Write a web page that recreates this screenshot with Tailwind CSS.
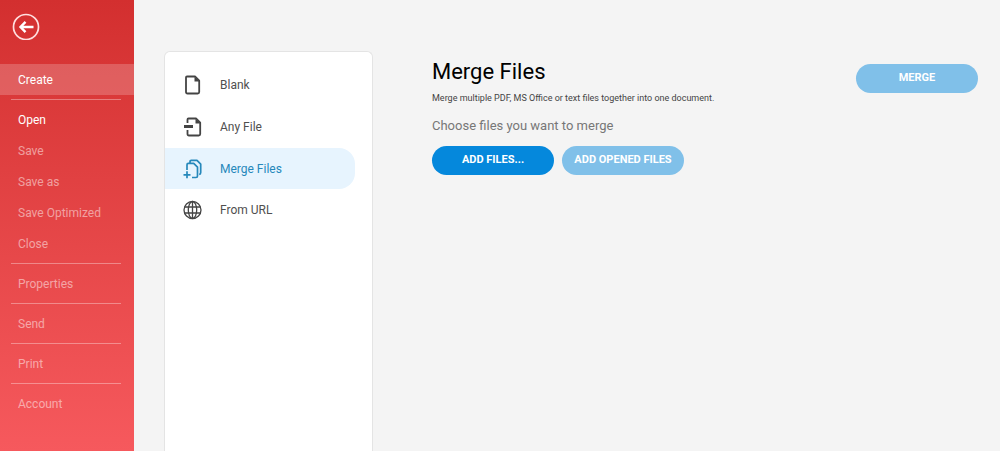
<!DOCTYPE html>
<html lang="en">
<head>
<meta charset="utf-8">
<title>Merge Files</title>
<script src="https://cdn.jsdelivr.net/npm/@tailwindcss/browser@4"></script>
</head>
<body class="flex h-screen overflow-hidden bg-[#f4f4f4] font-[Roboto,sans-serif] text-xs text-[#4f4f4f]">
  <aside class="w-[134px] shrink-0 bg-linear-to-b from-[#d32f2f] to-[#f6595d] pt-3">
    <button aria-label="Back" class="ml-3 block size-7">
      <svg viewBox="0 0 28 28" class="size-7" fill="none" stroke="#fff">
        <circle cx="14" cy="15" r="12.500" stroke-width="1.700" stroke="#ffdede"/>
        <path d="M21.500 15H9M13.500 9.800L8.500 15l5 5.200" stroke-width="2.400"/>
      </svg>
    </button>
    <nav class="mt-6 text-white/50">
      <a href="#" class="flex h-[31px] items-center bg-white/20 pl-[18px] text-white">Create</a>
      <hr class="mr-[13px] ml-[11px] my-1 border-white/35">
      <a href="#" class="flex h-[31px] items-center pl-[18px] text-white">Open</a>
      <a href="#" class="flex h-[31px] items-center pl-[18px]">Save</a>
      <a href="#" class="flex h-[31px] items-center pl-[18px]">Save as</a>
      <a href="#" class="flex h-[31px] items-center pl-[18px]">Save Optimized</a>
      <a href="#" class="flex h-[31px] items-center pl-[18px]">Close</a>
      <hr class="mr-[13px] ml-[11px] my-1 border-white/35">
      <a href="#" class="flex h-[31px] items-center pl-[18px]">Properties</a>
      <hr class="mr-[13px] ml-[11px] my-1 border-white/35">
      <a href="#" class="flex h-[31px] items-center pl-[18px]">Send</a>
      <hr class="mr-[13px] ml-[11px] my-1 border-white/35">
      <a href="#" class="flex h-[31px] items-center pl-[18px]">Print</a>
      <hr class="mr-[13px] ml-[11px] my-1 border-white/35">
      <a href="#" class="flex h-[31px] items-center pl-[18px]">Account</a>
    </nav>
  </aside>

  <nav class="mt-[51px] ml-[30px] w-[209px] shrink-0 rounded-t-md border border-b-0 border-[#e4e4e4] bg-white pt-3">
    <a href="#" class="flex h-[42px] items-center gap-4 pl-[17px]">
      <svg viewBox="0 0 22 22" class="size-[22px]" fill="none" stroke="#444" stroke-width="1.800" stroke-linejoin="round">
        <path d="M5 2.500h8.200l4 4.200V18q0 1.500-1.500 1.500H5.500Q4 19.500 4 18V3.500q0-1 1-1z"/>
        <path d="M12.500 2.500v5h5z" fill="#444" stroke="none"/>
      </svg>
      Blank
    </a>
    <a href="#" class="flex h-[42px] items-center gap-4 pl-[17px]">
      <svg viewBox="0 0 22 22" class="size-[22px]" fill="none" stroke="#444" stroke-width="1.800" stroke-linejoin="round">
        <path d="M5.500 7V3.500q0-1 1-1h7.700l4 4.200V18q0 1.500-1.500 1.500H7Q5.500 19.500 5.500 18v-4"/>
        <path d="M13.500 2.500v5h5z" fill="#444" stroke="none"/>
        <path d="M2 10.500h9" stroke-width="3"/>
      </svg>
      Any File
    </a>
    <a href="#" class="mr-[17px] flex h-[41px] items-center gap-4 rounded-r-2xl bg-[#e7f4fe] pl-[17px] text-[#2688bb]">
      <svg viewBox="0 0 22 22" class="size-[22px]" fill="none" stroke="#2688bb" stroke-width="1.700" stroke-linejoin="round">
        <path d="M8 5V3.700q0-1.300 1.300-1.300H15l3.700 3.700v8.400q0 1.700-1.500 2"/>
        <path d="M5 12V6.800q0-1.400 1.300-1.400h5.400l3.800 3.800v8.800q0 1.500-1.500 1.500h-4"/>
        <path d="M1.500 16.800h7M5 13.300v7"/>
      </svg>
      Merge Files
    </a>
    <a href="#" class="flex h-[42px] items-center gap-4 pl-[17px]">
      <svg viewBox="0 0 22 22" class="size-[22px]" fill="none" stroke="#444" stroke-width="1.300">
        <circle cx="10.500" cy="11" r="8.500"/>
        <ellipse cx="10.500" cy="11" rx="4.200" ry="8.500"/>
        <path d="M10.500 2.500v17M2.500 8h16M2.500 14h16"/>
      </svg>
      From URL
    </a>
  </nav>

  <main class="ml-[59px] flex min-w-0 flex-1 items-start justify-between pr-[22px]">
    <section class="pt-14">
      <h1 class="text-[22px] leading-8 text-black">Merge Files</h1>
      <p class="mt-1 text-[9px] leading-3 text-[#444]">Merge multiple PDF, MS Office or text files together into one document.</p>
      <h2 class="mt-3 text-[13px] leading-5 text-[#777]">Choose files you want to merge</h2>
      <div class="mt-[10px] flex gap-2 text-[11px] font-bold text-white">
        <button class="h-[29px] w-[122px] rounded-full bg-[#0588dc]">ADD FILES...</button>
        <button class="h-[29px] w-[122px] rounded-full bg-[#80c0e9]">ADD OPENED FILES</button>
      </div>
    </section>
    <button class="mt-16 h-[29px] w-[122px] rounded-full bg-[#80c0e9] text-[11px] font-bold text-white">MERGE</button>
  </main>
</body>
</html>
